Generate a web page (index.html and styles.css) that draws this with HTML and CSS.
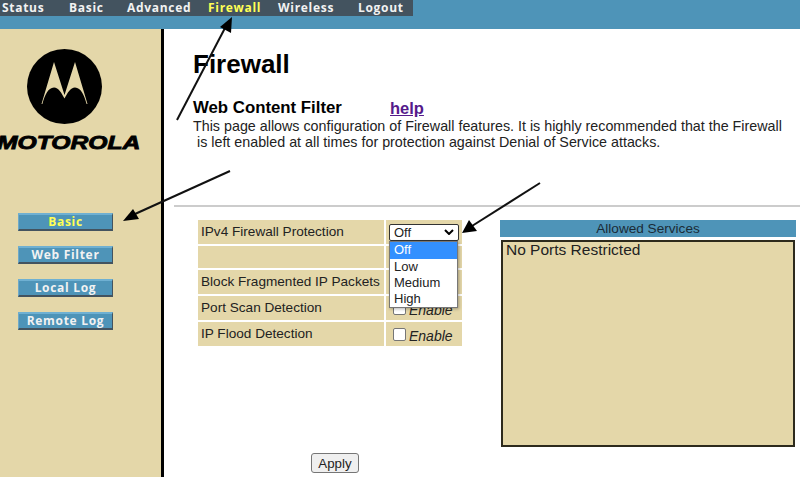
FILE: index.html
```html
<!DOCTYPE html>
<html lang="en-us">
<head>
  <meta charset="utf-8">
  <title>Firewall</title>
  <link rel="stylesheet" href="styles.css">
</head>
<body>
  <!-- Top bar -->
  <div class="topbar">
    <div class="nav">
      <a class="nav-status">Status</a>
      <a class="nav-basic">Basic</a>
      <a class="nav-advanced">Advanced</a>
      <a class="nav-firewall active">Firewall</a>
      <a class="nav-wireless">Wireless</a>
      <a class="nav-logout">Logout</a>
    </div>
  </div>

  <div class="page">
    <!-- Side menu -->
    <div class="sidebar">
      <svg class="logo" width="75" height="75" viewBox="0 0 75 75">
        <circle cx="37.5" cy="37.5" r="37.5" fill="#000"/>
        <path fill="#e4d7a9" d="M14.5 55 L27 13 L37.5 46 L48 13 L60.5 55 L59.6 55 C57.5 47 54 38.5 48 38.5 C43.5 38.5 40.5 44 37.5 49.5 C34.5 44 31.5 38.5 27 38.5 C21 38.5 17.5 47 15.4 55 Z"/>
      </svg>
      <div class="wordmark">MOTOROLA</div>
      <div class="side-menu">
        <a class="side-btn active">Basic</a>
        <a class="side-btn">Web Filter</a>
        <a class="side-btn">Local Log</a>
        <a class="side-btn">Remote Log</a>
      </div>
    </div>

    <!-- Main content -->
    <div class="main">
      <div class="heading">
        <h1>Firewall</h1>
        <div class="subhead">
          <h2>Web Content Filter</h2>
          <a class="help">help</a>
        </div>
        <p class="intro">This page allows configuration of Firewall features. It is highly recommended that the Firewall<br>&nbsp;is left enabled at all times for protection against Denial of Service attacks.</p>
      </div>
      <hr class="rule">
      <div class="settings">
        <div class="form-col">
          <div class="form-grid">
            <div class="cell row-a">IPv4 Firewall Protection</div>
            <div class="cell row-a select-cell">
              <div class="select">Off
                <svg width="10" height="6" viewBox="0 0 10 6"><path d="M1 1 L5 5 L9 1" fill="none" stroke="#000" stroke-width="2"/></svg>
              </div>
              <div class="dropdown">
                <div class="option selected">Off</div>
                <div class="option">Low</div>
                <div class="option">Medium</div>
                <div class="option">High</div>
              </div>
            </div>
            <div class="cell row-b"></div>
            <div class="cell row-b"></div>
            <div class="cell row-a">Block Fragmented IP Packets</div>
            <div class="cell row-a"></div>
            <div class="cell row-c">Port Scan Detection</div>
            <div class="cell row-c check-cell"><span class="check"></span><em>Enable</em></div>
            <div class="cell row-a">IP Flood Detection</div>
            <div class="cell row-a check-cell"><span class="check"></span><em>Enable</em></div>
          </div>
          <button class="apply">Apply</button>
        </div>
        <div class="services">
          <div class="services-title">Allowed Services</div>
          <div class="services-box">No Ports Restricted</div>
        </div>
      </div>
    </div>
  </div>

  <!-- Annotation arrows -->
  <svg class="arrows" width="800" height="477" viewBox="0 0 800 477">
    <g stroke="#111" stroke-width="2" fill="#000">
      <line x1="177" y1="120" x2="225" y2="28"/>
      <line x1="230" y1="171" x2="135" y2="214"/>
      <line x1="540" y1="183" x2="472" y2="226"/>
    </g>
    <path d="M232 17 L231 33 L220 27 Z"/>
    <path d="M123 221 L133 209 L139 219 Z"/>
    <path d="M462 233 L469 220 L477 231 Z"/>
  </svg>
</body>
</html>
```

FILE: styles.css
```css
body, html {
  margin: 0;
  height: 100%;
  overflow: hidden;
  background: #fff;
  font-family: "Liberation Sans", Arial, sans-serif;
}
.topbar {
  height: 29px;
  background: #4e94b8;
}
.nav {
  width: 413px;
  height: 16px;
  padding-bottom: 2px;
  box-sizing: border-box;
  background: #43535f;
  display: flex;
  align-items: center;
  font-family: "Open Sans", sans-serif;
  font-size: 12px;
  font-weight: 700;
  letter-spacing: 0.7px;
  color: #f2f2f2;
  white-space: nowrap;
}
.nav a {
  display: block;
}
.nav-status { width: 69px; padding-left: 2px; box-sizing: border-box; }
.nav-basic { width: 58px; }
.nav-advanced { width: 81px; }
.nav-firewall { width: 70px; }
.nav-wireless { width: 80px; }
.nav .active {
  color: #ffff55;
}
.page {
  display: flex;
  height: 448px;
}
.sidebar {
  width: 161px;
  flex: none;
  background: #e4d7a9;
  border-right: 3px solid #000;
  overflow: hidden;
}
.logo {
  display: block;
  margin: 20px 0 0 27px;
}
.wordmark {
  margin: 10px 0 0 -3px;
  font-size: 18px;
  line-height: 18px;
  font-weight: bold;
  font-style: italic;
  color: #000;
  transform-origin: left center;
  transform: scaleX(1.37);
  white-space: nowrap;
  -webkit-text-stroke: 0.8px #000;
}
.side-menu {
  margin: 61px 0 0 18px;
  display: flex;
  flex-direction: column;
  gap: 15px;
}
.side-btn {
  width: 95px;
  height: 18px;
  box-sizing: border-box;
  background: #4e94b8;
  border-top: 2px solid #6fb0d2;
  border-left: 1px solid #6fa9c8;
  border-bottom: 2px solid #43535f;
  border-right: 1px solid #43535f;
  color: #f2f2f2;
  font-family: "Open Sans", sans-serif;
  font-size: 12px;
  font-weight: 700;
  letter-spacing: 0.7px;
  line-height: 14px;
  text-align: center;
}
.side-btn.active {
  color: #ffff55;
}
.main {
  flex: 1;
  min-width: 0;
}
.heading {
  padding: 20px 0 0 29px;
}
h1 {
  margin: 0;
  font-size: 26px;
  line-height: 31px;
  color: #000;
}
.subhead {
  display: flex;
  margin-top: 19px;
  height: 18px;
  align-items: center;
}
h2 {
  margin: 0;
  width: 197px;
  font-size: 16.8px;
  color: #000;
}
.help {
  font-size: 16.5px;
  font-weight: bold;
  color: #551a8b;
  text-decoration: underline;
}
.intro {
  margin: 1px 0 0;
  font-size: 14.3px;
  line-height: 16px;
  color: #222;
  white-space: nowrap;
}
.rule {
  margin: 55px 0 0 10px;
  border: none;
  height: 2px;
  background: #ccc;
}
.settings {
  display: flex;
  padding: 13px 0 0 34px;
}
.form-col {
  width: 302px;
}
.form-grid {
  display: grid;
  grid-template-columns: 186px 76px;
  grid-template-rows: 24px 22px 24px 24px 24px;
  gap: 2px;
  font-size: 13.6px;
  color: #222;
}
.cell {
  background: #e4d7a9;
  padding: 0 0 2px 3px;
  display: flex;
  align-items: center;
  white-space: nowrap;
}
.select-cell {
  position: relative;
  padding-bottom: 0;
}
.select {
  width: 70px;
  height: 17px;
  box-sizing: border-box;
  background: #fff;
  border: 1px solid #333;
  border-radius: 2px;
  padding: 0 4px;
  font-size: 13px;
  line-height: 15px;
  display: flex;
  justify-content: space-between;
  align-items: center;
}
.dropdown {
  position: absolute;
  left: 3px;
  top: 21px;
  width: 69px;
  background: #fff;
  border: 1px solid #777;
  box-sizing: border-box;
  box-shadow: 1px 1px 3px rgba(0, 0, 0, 0.3);
  font-size: 13px;
  z-index: 1;
}
.option {
  height: 16px;
  line-height: 16px;
  padding-left: 4px;
}
.option.selected {
  background: #3390ff;
  color: #fff;
  height: 17px;
}
.check-cell {
  padding: 0 0 0 7px;
  gap: 3px;
  font-size: 14px;
}
.check-cell em {
  padding-top: 3px;
}
.check {
  width: 11px;
  height: 11px;
  background: #fff;
  border: 1px solid #767676;
  border-radius: 2px;
}
.apply {
  display: block;
  margin: 107px 0 0 113px;
  width: 48px;
  height: 20px;
  padding: 0;
  background: #efefef;
  border: 1px solid #767676;
  border-radius: 3px;
  font-family: "Liberation Sans", Arial, sans-serif;
  font-size: 13.3px;
  color: #222;
}
.services {
  width: 296px;
}
.services-title {
  height: 17px;
  background: #4e94b8;
  color: #1b2b36;
  font-size: 13.6px;
  line-height: 17px;
  text-align: center;
}
.services-box {
  margin: 3px 1px 0;
  height: 207px;
  box-sizing: border-box;
  background: #e4d7a9;
  border: 2px solid #2d2a1c;
  padding-left: 3px;
  font-size: 15.5px;
  line-height: 15px;
  color: #222;
}
.arrows {
  position: absolute;
  left: 0;
  top: 0;
  pointer-events: none;
}
```
